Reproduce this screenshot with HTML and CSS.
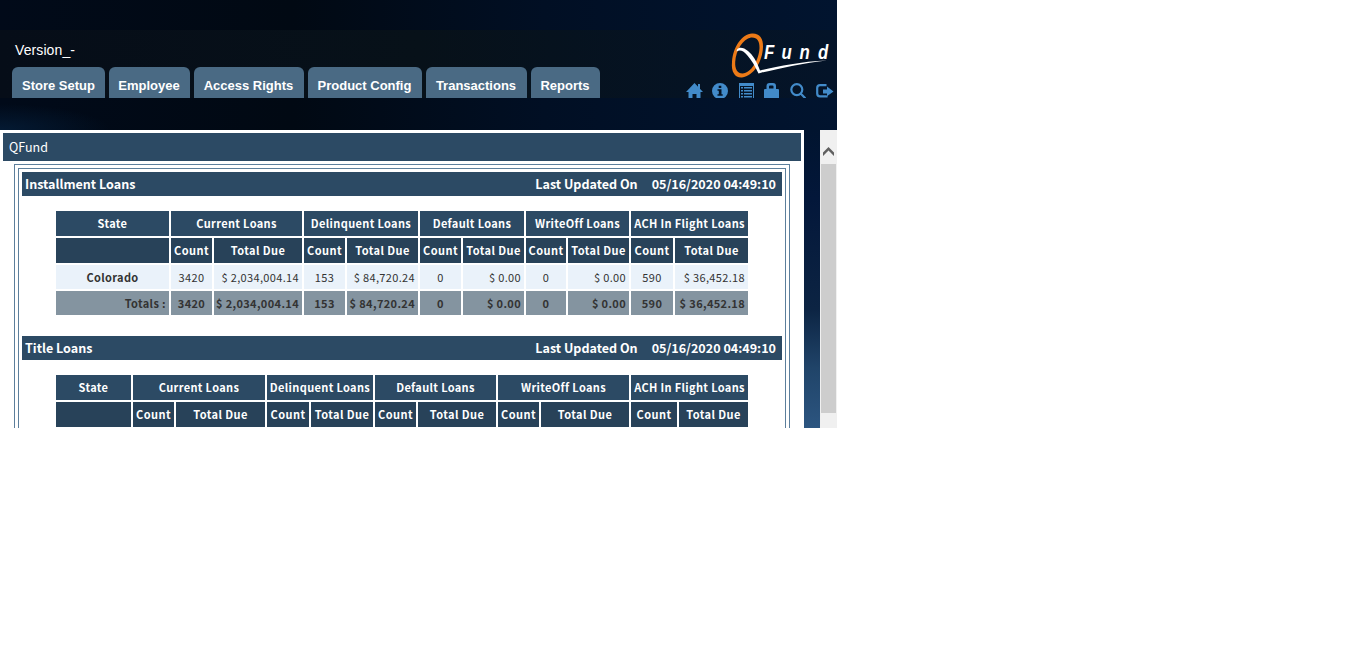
FILE: index.html
```html
<!DOCTYPE html>
<html lang="en">
<head>
<meta charset="utf-8">
<title>QFund</title>
<link rel="stylesheet" href="styles.css">
</head>
<body>
<div class="app">
  <header class="header">
    <div class="left">
      <div class="version">Version_-</div>
      <nav class="tabs">
        <a class="tab t1"><span>Store Setup</span></a><a class="tab t2"><span>Employee</span></a><a class="tab t3"><span>Access Rights</span></a><a class="tab t4"><span>Product Config</span></a><a class="tab t5"><span>Transactions</span></a><a class="tab t6"><span>Reports</span></a>
      </nav>
    </div>
    <div class="brand">
      <svg class="logo" width="107" height="48" viewBox="0 0 107 48">
        <path fill="#ec7a17" fill-rule="evenodd" d="M22 3.500C29 3 33.500 8 33 17C32.500 31 24 46 12 47.500C5 48 1 42 2 32C3 17 12 4 22 3.500ZM21 7.500C13 9 6 20 5.200 32C4.800 39 7.500 43.500 12.500 43.500C21 43 29 30 29.500 18C29.700 11 27 7 21 7.500Z"/>
        <path fill="#fff" d="M7 19.500C9 16.500 14 17.500 18 21C23 25 27 32 30 40.500C48 36.500 70 31.500 97 30.500C74 33 50 38.500 31 42.800L28.500 43.500C25 36 21.500 30 17 25C13 20.500 10 19.500 6.500 21.500Z"/>
        <g class="word"><text transform="translate(34 29) scale(.8 1)">F</text><text transform="translate(51.500 29) scale(.8 1)">u</text><text transform="translate(69.500 29) scale(.8 1)">n</text><text transform="translate(88 29) scale(.8 1)">d</text></g>
      </svg>
      <div class="icons">
        <svg width="17" height="16" viewBox="0 0 17 16"><path d="M8.500 0L17 9H14.500V16H10.500V11H6.500V16H2.500V9H0L8.500 0ZM12 1H14V6H12Z"/></svg>
        <svg width="16" height="16" viewBox="0 0 16 16"><path fill-rule="evenodd" d="M8 0A8 8 0 1 1 8 16A8 8 0 0 1 8 0ZM6.700 2.800H9.300V4.900H6.700ZM5.500 6.200H9.500V11.300H10.700V12.800H5.500V11.300H6.800V7.800H5.500Z"/></svg>
        <svg width="15" height="16" viewBox="0 0 15 16"><path fill-rule="evenodd" d="M0 0H15V16H0ZM1 3V16H14V3Z"/><path d="M2 4H4V5.500H2ZM5 4H13V5.500H5ZM2 7H4V8.500H2ZM5 7H13V8.500H5ZM2 10H4V11.500H2ZM5 10H13V11.500H5ZM2 13H4V14.500H2ZM5 13H13V14.500H5Z"/></svg>
        <svg width="15" height="16" viewBox="0 0 15 16"><path fill-rule="evenodd" d="M0 7Q0 6 1 6H2.500V3Q2.500 0 5.500 0H9Q12 0 12 3V6H14Q15 6 15 7V16H0ZM5 5.500H9.500V3.500Q9.500 2.500 8.500 2.500H6Q5 2.500 5 3.500Z"/></svg>
        <svg width="16" height="16" viewBox="0 0 16 16"><path fill="none" stroke="#428bca" stroke-width="2.200" d="M12.300 6.600A5.500 5.500 0 1 1 1.300 6.600A5.500 5.500 0 0 1 12.300 6.600ZM10.700 10.500L15.500 15.500"/></svg>
        <svg width="18" height="16" viewBox="0 0 18 16"><path fill="none" stroke="#428bca" stroke-width="2.200" d="M10.500 2.200H4Q1.200 2.200 1.200 5V10.500Q1.200 13.300 4 13.300H10.500V12.500"/><path d="M11 3.500L17.500 8.500L11 13.300V10.500H7V6.500H11Z"/></svg>
      </div>
    </div>
  </header>
  <div class="main">
    <main class="page">
      <h1>QFund</h1>
      <div class="outer"><div class="inner">
        <h2><span>Installment Loans</span><span class="lu">Last Updated On</span><span>05/16/2020 04:49:10</span></h2>
        <table class="first">
          <colgroup><col class="w113"><col class="w41"><col class="w88"><col class="w41"><col class="w71"><col class="w41"><col class="w61"><col class="w40"><col class="w61"><col class="w42"><col class="w73"></colgroup>
          <tr class="groups"><th>State</th><th colspan="2">Current Loans</th><th colspan="2">Delinquent Loans</th><th colspan="2">Default Loans</th><th colspan="2">WriteOff Loans</th><th colspan="2">ACH In Flight Loans</th></tr>
          <tr class="heads"><th></th><th>Count</th><th>Total Due</th><th>Count</th><th>Total Due</th><th>Count</th><th>Total Due</th><th>Count</th><th>Total Due</th><th>Count</th><th>Total Due</th></tr>
          <tr class="data"><td class="st">Colorado</td><td>3420</td><td class="amt">$ 2,034,004.14</td><td>153</td><td class="amt">$ 84,720.24</td><td>0</td><td class="amt">$ 0.00</td><td>0</td><td class="amt">$ 0.00</td><td>590</td><td class="amt">$ 36,452.18</td></tr>
          <tr class="totals"><td class="amt">Totals :</td><td>3420</td><td class="amt">$ 2,034,004.14</td><td>153</td><td class="amt">$ 84,720.24</td><td>0</td><td class="amt">$ 0.00</td><td>0</td><td class="amt">$ 0.00</td><td>590</td><td class="amt">$ 36,452.18</td></tr>
        </table>
        <h2><span>Title Loans</span><span class="lu">Last Updated On</span><span>05/16/2020 04:49:10</span></h2>
        <table>
          <colgroup><col class="w75"><col class="w41"><col class="w89"><col class="w42"><col class="w62"><col class="w41"><col class="w78"><col class="w41"><col class="w88"><col class="w46"><col class="w69"></colgroup>
          <tr class="groups"><th>State</th><th colspan="2">Current Loans</th><th colspan="2">Delinquent Loans</th><th colspan="2">Default Loans</th><th colspan="2">WriteOff Loans</th><th colspan="2">ACH In Flight Loans</th></tr>
          <tr class="heads"><th></th><th>Count</th><th>Total Due</th><th>Count</th><th>Total Due</th><th>Count</th><th>Total Due</th><th>Count</th><th>Total Due</th><th>Count</th><th>Total Due</th></tr>
        </table>
      </div></div>
    </main>
    <div class="scroll">
      <svg width="17" height="34" viewBox="0 0 17 34"><path d="M3 22.500L8.500 17L14 22.500V26L8.500 20.500L3 26Z" fill="#606060"/></svg>
      <div class="thumb"></div>
    </div>
  </div>
</div>
</body>
</html>
```
FILE: styles.css
```css
body { margin: 0; background: #fff; }
.app { display: flow-root; width: 837px; height: 428px; overflow: hidden; background: radial-gradient(ellipse 110px 26px at 0 130px, #041a33, transparent), linear-gradient(90deg, #010a19 0, #010913 35%, #010f24 65%, #01142f 100%); }
.header { box-sizing: border-box; height: 68px; margin-top: 30px; margin-bottom: 32px; background: linear-gradient(90deg, #060d18, #071119 50%, #041429); display: flex; justify-content: space-between; overflow: hidden; }
.left { padding-left: 12px; font-family: "Liberation Sans", Arial, sans-serif; color: #fff; }
.version { height: 37px; padding-left: 3px; box-sizing: border-box; padding-top: 12px; font-size: 14px; line-height: 17px; letter-spacing: 0.1px; }
.tabs { display: flex; gap: 4px; }
.tab { box-sizing: border-box; height: 31px; padding-top: 10px; text-align: center; font-size: 13px; font-weight: bold; line-height: 17px; background: #4a6a84; border-radius: 6px 6px 0 0; white-space: nowrap; }
.t1 { width: 93px; } .t2 { width: 81px; } .t3 { width: 110px; } .t4 { width: 114px; } .t5 { width: 101px; } .t6 { width: 69px; }
.tab span { display: block; }
.t2, .t3, .t4, .t5, .t6 { padding-right: 1px; }
.brand { width: 151px; }
.logo { display: block; margin-left: 44px; }
.word { font: italic bold 21px "Liberation Sans", Arial, sans-serif; fill: #fff; }
.icons { display: flex; height: 15px; margin-top: 5px; overflow: hidden; fill: #428bca; }
.icons svg { flex: none; margin-right: 9px; }
.icons svg:nth-child(2) { margin-right: 11px; }
.icons svg:nth-child(3) { margin-right: 10px; }
.icons svg:nth-child(4) { margin-right: 11px; }
.icons svg:nth-child(5) { margin-right: 10px; }
.main { display: flex; justify-content: space-between; height: 298px; background: linear-gradient(#01142f 0, #03173a 23%, #0c2443 60%, #204469 80%, #2c5580 100%); font-family: "Noto Sans CJK SC", sans-serif; }
.page { box-sizing: border-box; width: 804px; height: 298px; padding: 3px; background: #fff; overflow: hidden; }
h1 { margin: 0 0 3px; height: 28px; padding-left: 6px; box-sizing: border-box; background: #2c4a64; color: #fff; font-size: 12.500px; line-height: 28px; font-weight: 400; }
.outer { margin: 0 11px; border: 1px solid #5c7f9c; padding: 3px; height: 400px; }
.inner { border: 1px solid #5c7f9c; padding: 3px; height: 390px; }
h2 { margin: 0; height: 24px; padding: 0 6px 0 3px; box-sizing: border-box; display: flex; background: #2c4a64; color: #fff; font-size: 12.550px; line-height: 24px; font-weight: bold; white-space: nowrap; }
.lu { margin-left: auto; margin-right: 14px; }
table { table-layout: fixed; width: 696px; margin: 13px 0 0 32px; border-collapse: separate; border-spacing: 2px; font-size: 11px; letter-spacing: 0.350px; color: #333; }
.first { margin-bottom: 19px; }
td, th { padding: 0; height: 24px; line-height: 24px; text-align: center; white-space: nowrap; font-weight: 400; }
th { height: 25px; line-height: 25px; font-weight: bold; color: #fff; }
.groups th { background: #2c4a64; }
.heads th { background: #284259; letter-spacing: 0.420px; }
.data td { background: #eaf2fa; }
.data .st, .totals td { font-weight: bold; }
.totals td { background: #8494a0; }
td.amt { text-align: right; padding-right: 3px; }
.w113 { width: 113px; } .w41 { width: 41px; } .w88 { width: 88px; } .w71 { width: 71px; } .w61 { width: 61px; } .w40 { width: 40px; } .w42 { width: 42px; } .w73 { width: 73px; }
.w75 { width: 75px; } .w89 { width: 89px; } .w62 { width: 62px; } .w78 { width: 78px; } .w46 { width: 46px; } .w69 { width: 69px; }
.scroll { width: 17px; background: #f0f0f0; }
.scroll svg { display: block; }
.thumb { height: 249px; margin: 0 1px; background: #cdcdcd; }
```
